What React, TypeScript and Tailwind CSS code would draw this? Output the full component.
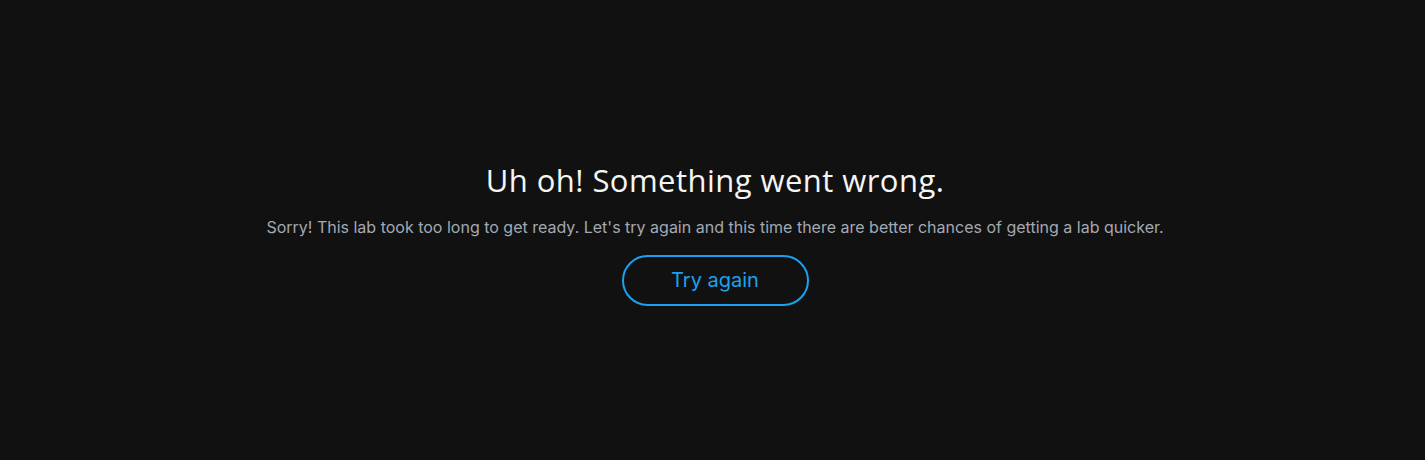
export default function App() {
  return (
    <div className="min-h-[460px] w-full bg-[#111111] flex flex-col items-center justify-center pl-[5px] font-['Inter',sans-serif]">
      <h1 className="text-[31px] leading-[40px] text-[#f5f5f5] font-normal tracking-[0.45px] font-['Open_Sans','Inter',sans-serif] mt-[5px]">
        Uh oh! Something went wrong.
      </h1>
      <p className="mt-[15px] text-[16px] leading-[24px] text-[#a3a9b3]">
        Sorry! This lab took too long to get ready. Let's try again and this time there are better chances of getting a lab quicker.
      </p>
      <button className="mt-[16px] w-[187px] h-[51px] rounded-full border-2 border-[#1da1ee] text-[#1da1ee] text-[20px] bg-transparent cursor-pointer">
        Try again
      </button>
    </div>
  );
}
